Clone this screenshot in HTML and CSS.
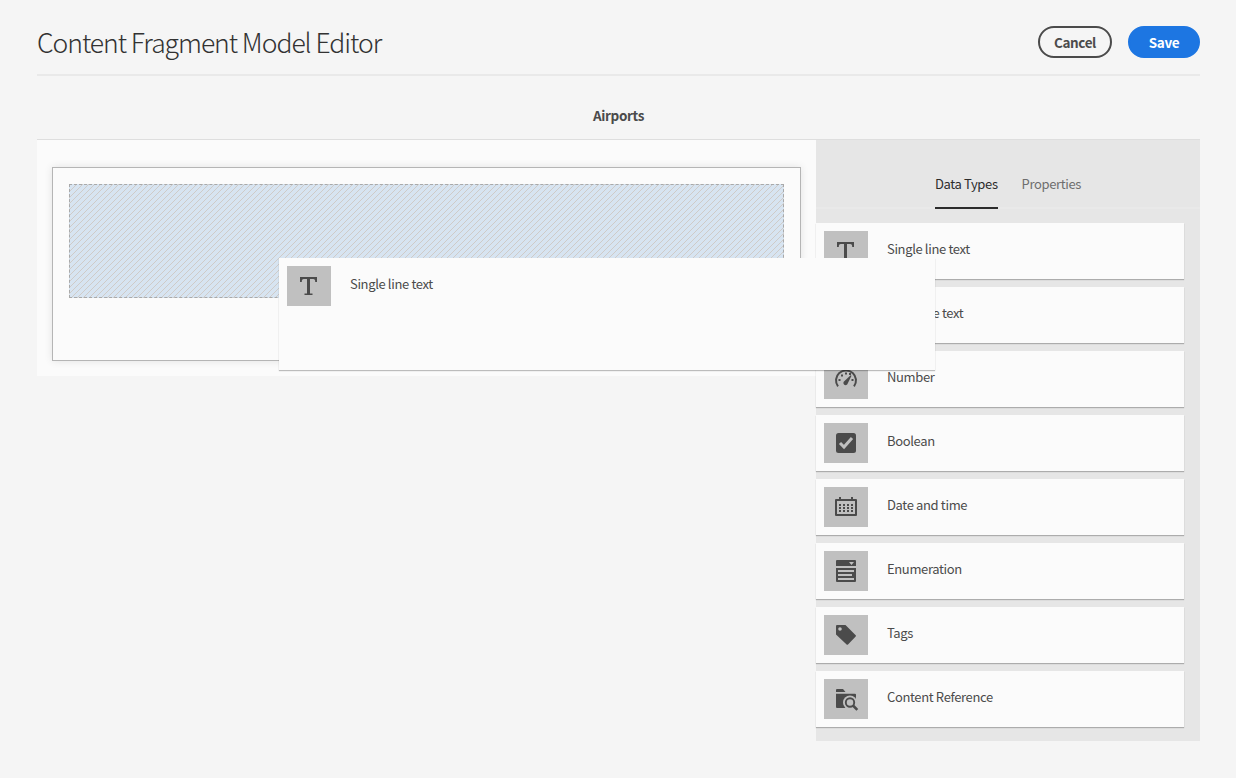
FILE: index.html
```html
<!DOCTYPE html>
<html lang="en">
<head>
<meta charset="utf-8">
<title>Content Fragment Model Editor</title>
<link rel="stylesheet" href="styles.css">
</head>
<body>
<svg class="sprite" aria-hidden="true">
  <symbol id="i-text" viewBox="0 0 44 40"><path d="M13 11h17v5h-1.800c0-2.300-.5-3-2-3h-3.200v14.500h2.500V29h-8v-1.500h2.500V13h-3.200c-1.500 0-2 .7-2 3H13z"/></symbol>
  <symbol id="i-number" viewBox="0 0 44 40"><path fill="none" stroke="currentColor" stroke-width="2" d="M14 27.400a10 10 0 1 1 16 0"/><path d="M26.600 16.200l.9.600-3.800 7.700a2.200 2.200 0 1 1-3.200-2.500zM14.500 20h2v2h-2zM17 15.500h2v2h-2zM21 13.500h2v2h-2zM27.500 20h2v2h-2zM25 14h2v2h-2z"/></symbol>
  <symbol id="i-boolean" viewBox="0 0 44 40"><rect x="12" y="10" width="20" height="20" rx="2.500"/><path fill="none" stroke="#c0c0c0" stroke-width="3" d="M16 20l4 4 8-9"/></symbol>
  <symbol id="i-date" viewBox="0 0 44 40"><path fill-rule="evenodd" d="M12 12h3v-2h2v2h10v-2h2v2h3q1 0 1 1v15q0 1-1 1H12q-1 0-1-1V13q0-1 1-1zm1 2v13h18V14z"/><path fill="none" stroke="currentColor" stroke-width="2" stroke-dasharray="2" d="M15 18h14M15 21h14M15 24h14"/></symbol>
  <symbol id="i-enum" viewBox="0 0 44 40"><path fill-rule="evenodd" d="M13 9h18q1 0 1 1v5H12v-5q0-1 1-1zm12 2l2.500 3 2.500-3zM12 17h20v13q0 1-1 1H13q-1 0-1-1zm2 2v2h16v-2zm0 4v2h14v-2zm0 4v2h16v-2z"/></symbol>
  <symbol id="i-tag" viewBox="0 0 44 40"><path fill-rule="evenodd" d="M12 11q0-1 1-1h8.500l10.200 10.200q.6.600 0 1.200L24 29.500q-.7.700-1.400 0L12 19.500zm4 1.200a1.800 1.800 0 1 0 0 3.600 1.800 1.800 0 0 0 0-3.600z"/></symbol>
  <symbol id="i-ref" viewBox="0 0 44 40"><path d="M12 11q0-1 1-1h6l2.500 3H12zM12 14.800h19q1 0 1 1V29H13q-1 0-1-1z"/><circle cx="26" cy="23.500" r="7" fill="#c0c0c0"/><path fill="#c0c0c0" d="M26 24h8v6h-13z"/><circle cx="26" cy="23.500" r="4.200" fill="#c0c0c0" stroke="currentColor" stroke-width="1.900"/><path stroke="currentColor" stroke-width="2.600" d="M29 26.500l4.300 4.300"/></symbol>
</svg>
<main class="page">
  <header class="header">
    <h1 class="title">Content Fragment Model Editor</h1>
    <div class="actions">
      <button class="button">Cancel</button>
      <button class="button primary">Save</button>
    </div>
  </header>
  <h2 class="model-name">Airports</h2>
  <div class="editor">
    <section class="canvas">
      <div class="fields"><div class="placeholder"></div></div>
    </section>
    <aside class="side">
      <nav class="tabs"><span class="tab selected">Data Types</span><span class="tab">Properties</span></nav>
      <div class="types">
        <div class="card"><svg class="icon"><use href="#i-text"/></svg><span class="label">Single line text</span></div>
        <div class="card"><svg class="icon"><use href="#i-text"/></svg><span class="label">Multi line text</span></div>
        <div class="card"><svg class="icon"><use href="#i-number"/></svg><span class="label">Number</span></div>
        <div class="card"><svg class="icon"><use href="#i-boolean"/></svg><span class="label">Boolean</span></div>
        <div class="card"><svg class="icon"><use href="#i-date"/></svg><span class="label">Date and time</span></div>
        <div class="card"><svg class="icon"><use href="#i-enum"/></svg><span class="label">Enumeration</span></div>
        <div class="card"><svg class="icon"><use href="#i-tag"/></svg><span class="label">Tags</span></div>
        <div class="card"><svg class="icon"><use href="#i-ref"/></svg><span class="label">Content Reference</span></div>
      </div>
    </aside>
  </div>
</main>
<div class="card dragged"><svg class="icon"><use href="#i-text"/></svg><span class="label">Single line text</span></div>
</body>
</html>
```
FILE: styles.css
```css
* { box-sizing: border-box; }
body {
  margin: 0;
  height: 778px;
  overflow: hidden;
  background: #f5f5f5;
  color: #4b4b4b;
  font-family: "Noto Sans CJK SC", "Open Sans", sans-serif;
  font-size: 13px;
  letter-spacing: -.36px;
}
.sprite { display: none; }
.page { padding: 0 36px 0 37px; }
.header {
  display: flex;
  justify-content: space-between;
  height: 76px;
  padding-top: 26px;
  border-bottom: 2px solid #e9e9e9;
}
.title {
  margin: 0;
  color: #323232;
  font-size: 26.500px;
  font-weight: 300;
  letter-spacing: -1.040px;
  line-height: 31px;
  white-space: nowrap;
}
.actions { display: flex; gap: 16px; }
.button {
  width: 74px;
  height: 32px;
  padding: 0 0 1px;
  border: 2px solid #4b4b4b;
  border-radius: 16px;
  background: transparent;
  color: #4b4b4b;
  font: 700 13.500px/26px "Noto Sans CJK SC", "Open Sans", sans-serif;
  letter-spacing: -.400px;
}
.primary { width: 72px; border-color: #1d76e2; background: #1d76e2; color: #fff; }
.model-name {
  height: 63px;
  margin: 0;
  padding-top: 29px;
  font-size: 13.500px;
  font-weight: 600;
  line-height: 20px;
  text-align: center;
}
.editor { display: flex; align-items: flex-start; }
.canvas {
  width: 779px;
  height: 237px;
  padding: 27px 15px 15px;
  border-top: 1px solid #dedede;
  background: #fbfbfb;
}
.fields {
  width: 749px;
  height: 194px;
  padding: 16px;
  border: 1px solid #b5b5b5;
  box-shadow: 0 0 8px rgba(0, 0, 0, .1);
}
.placeholder {
  height: 114px;
  border: 1px dashed #a9a9a9;
  background: #d7e4f1 linear-gradient(135deg, transparent 45%, #cfcbc8 45%, #cfcbc8 55%, transparent 55%) 0 0 / 6px 6px;
}
.side {
  width: 384px;
  height: 602px;
  border-top: 1px solid #dedede;
  background: #e6e6e6;
}
.tabs {
  display: flex;
  justify-content: center;
  gap: 24px;
  height: 69px;
  padding-top: 33px;
  border-bottom: 2px solid #e9e9e9;
  line-height: 22px;
}
.tab { height: 36px; color: #6e6e6e; }
.selected { border-bottom: 2px solid #2c2c2c; color: #2c2c2c; }
.types { display: grid; gap: 8px; width: 368px; padding-top: 14px; }
.card {
  display: flex;
  gap: 19px;
  height: 56px;
  padding: 8px;
  background: #fbfbfb;
  box-shadow: 0 1px 1px rgba(0, 0, 0, .25);
}
.icon { width: 44px; height: 40px; background: #c0c0c0; color: #4b4b4b; fill: currentColor; }
.label { line-height: 35px; white-space: nowrap; }
.dragged { position: absolute; left: 279px; top: 258px; width: 656px; height: 112px; }
```
